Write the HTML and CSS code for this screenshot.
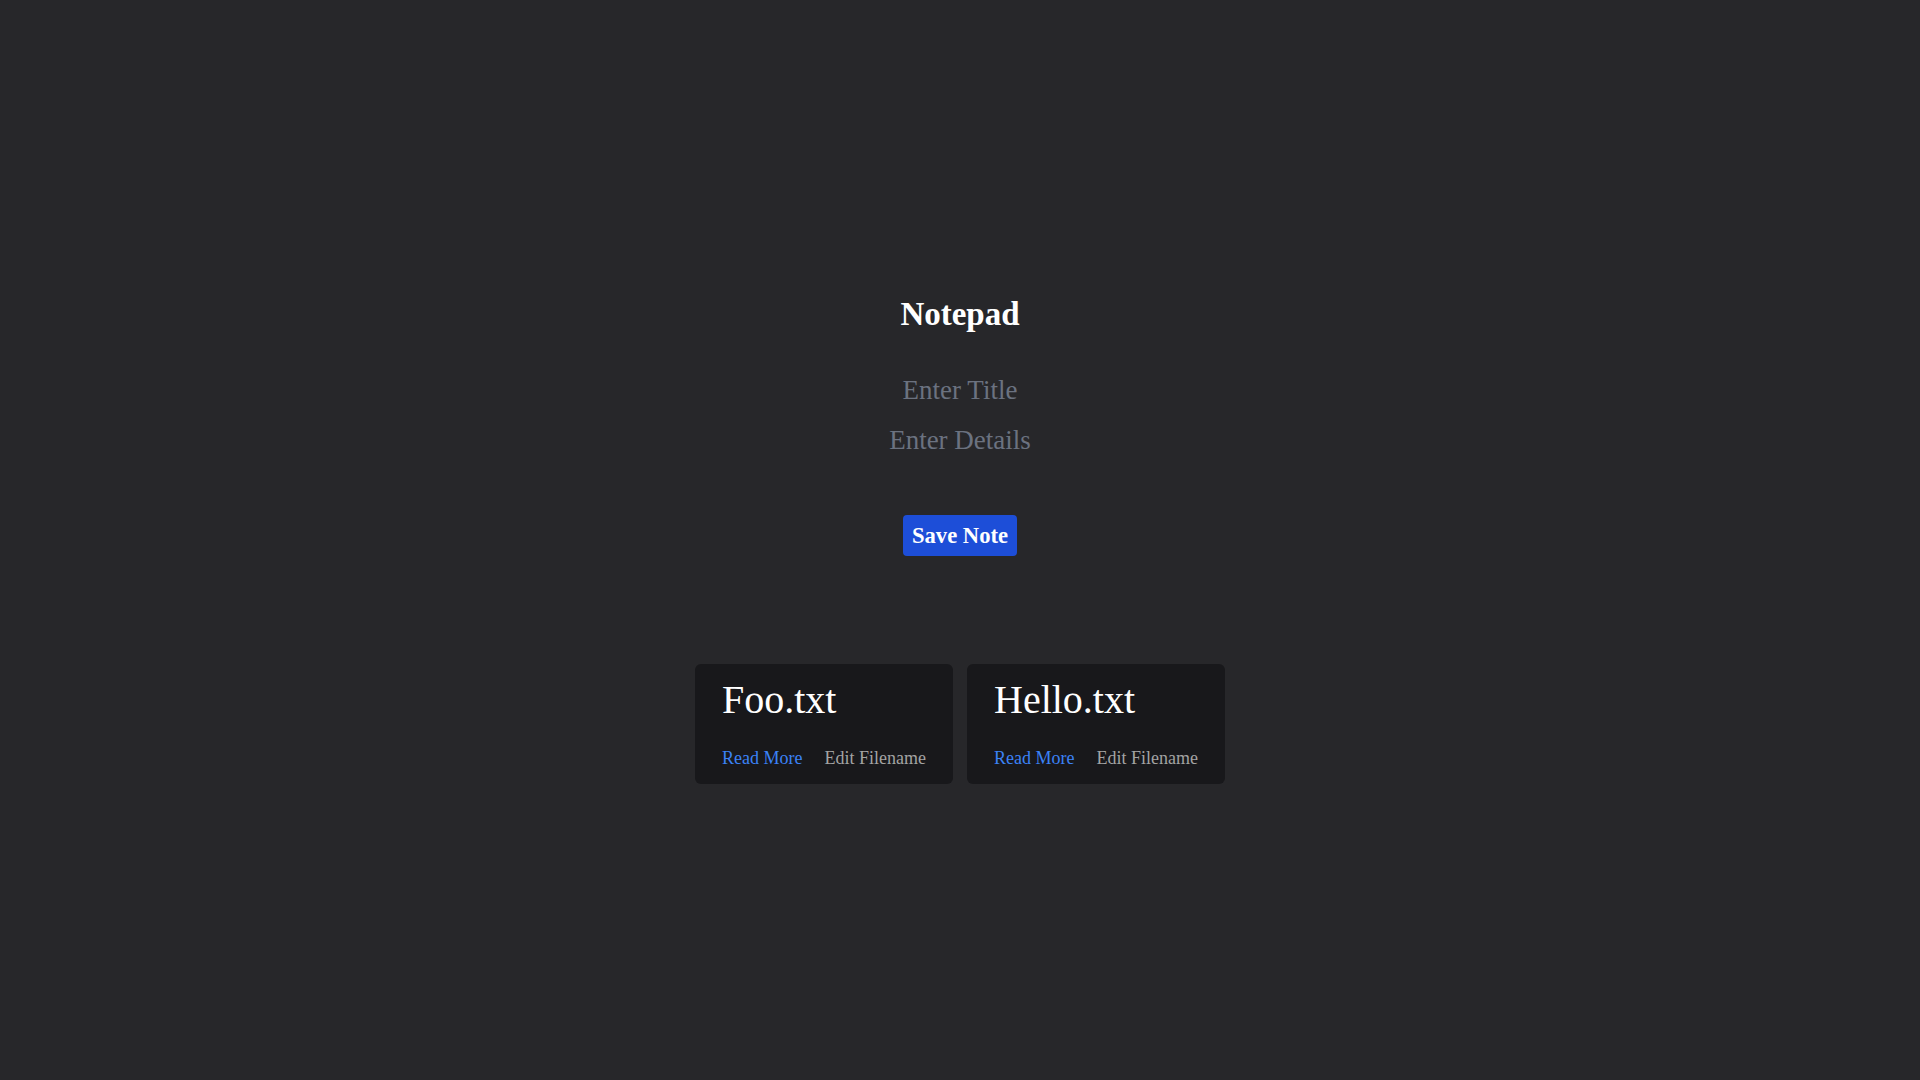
FILE: index.html
```html
<!DOCTYPE html>
<html lang="en">
<head>
<meta charset="utf-8">
<title>Notepad</title>
<link rel="stylesheet" href="styles.css">
</head>
<body>
<main class="app">
  <h1 class="app-title">Notepad</h1>
  <form class="note-form">
    <input class="field" type="text" placeholder="Enter Title">
    <input class="field" type="text" placeholder="Enter Details">
    <button class="save-btn" type="button">Save Note</button>
  </form>
  <section class="notes">
    <article class="note-card">
      <h2 class="note-title">Foo.txt</h2>
      <div class="note-actions">
        <a class="link-read" href="#">Read More</a>
        <a class="link-edit" href="#">Edit Filename</a>
      </div>
    </article>
    <article class="note-card">
      <h2 class="note-title">Hello.txt</h2>
      <div class="note-actions">
        <a class="link-read" href="#">Read More</a>
        <a class="link-edit" href="#">Edit Filename</a>
      </div>
    </article>
  </section>
</main>
</body>
</html>
```
FILE: styles.css
```css
* { box-sizing: border-box; }
html, body { margin: 0; padding: 0; }
body {
  background: #27272a;
  color: #ffffff;
  font-family: "Liberation Serif", "Times New Roman", serif;
  min-height: 100vh;
}
.app {
  display: flex;
  flex-direction: column;
  align-items: center;
  padding-top: 294px;
}
.app-title {
  margin: 0;
  font-size: 33px;
  line-height: 40px;
  font-weight: bold;
  color: #ffffff;
}
.note-form {
  display: flex;
  flex-direction: column;
  align-items: center;
  margin-top: 31px;
}
.field {
  width: 400px;
  height: 50px;
  padding: 0;
  border: none;
  outline: none;
  background: transparent;
  color: #e5e7eb;
  font-family: "Liberation Serif", "Times New Roman", serif;
  font-size: 27px;
  text-align: center;
}
.field::placeholder { color: #6b7280; opacity: 1; }
.save-btn {
  margin-top: 50px;
  height: 41px;
  padding: 0 9px;
  border: none;
  border-radius: 4px;
  background: #1d4ed8;
  color: #ffffff;
  font-family: "Liberation Serif", "Times New Roman", serif;
  font-size: 22.6px;
  font-weight: bold;
  line-height: 41px;
}
.notes {
  display: flex;
  gap: 14px;
  margin-top: 108px;
}
.note-card {
  background: #18181b;
  border-radius: 6px;
  padding: 12px 27px 14px;
  min-width: 258px;
}
.note-title {
  margin: 0;
  font-size: 40px;
  line-height: 48px;
  font-weight: normal;
  color: #ffffff;
}
.note-actions {
  display: flex;
  gap: 22px;
  margin-top: 22px;
  font-size: 18px;
  line-height: 24px;
}
.link-read { color: #3b82f6; text-decoration: none; }
.link-edit { color: #a3a3a3; text-decoration: none; }
```
